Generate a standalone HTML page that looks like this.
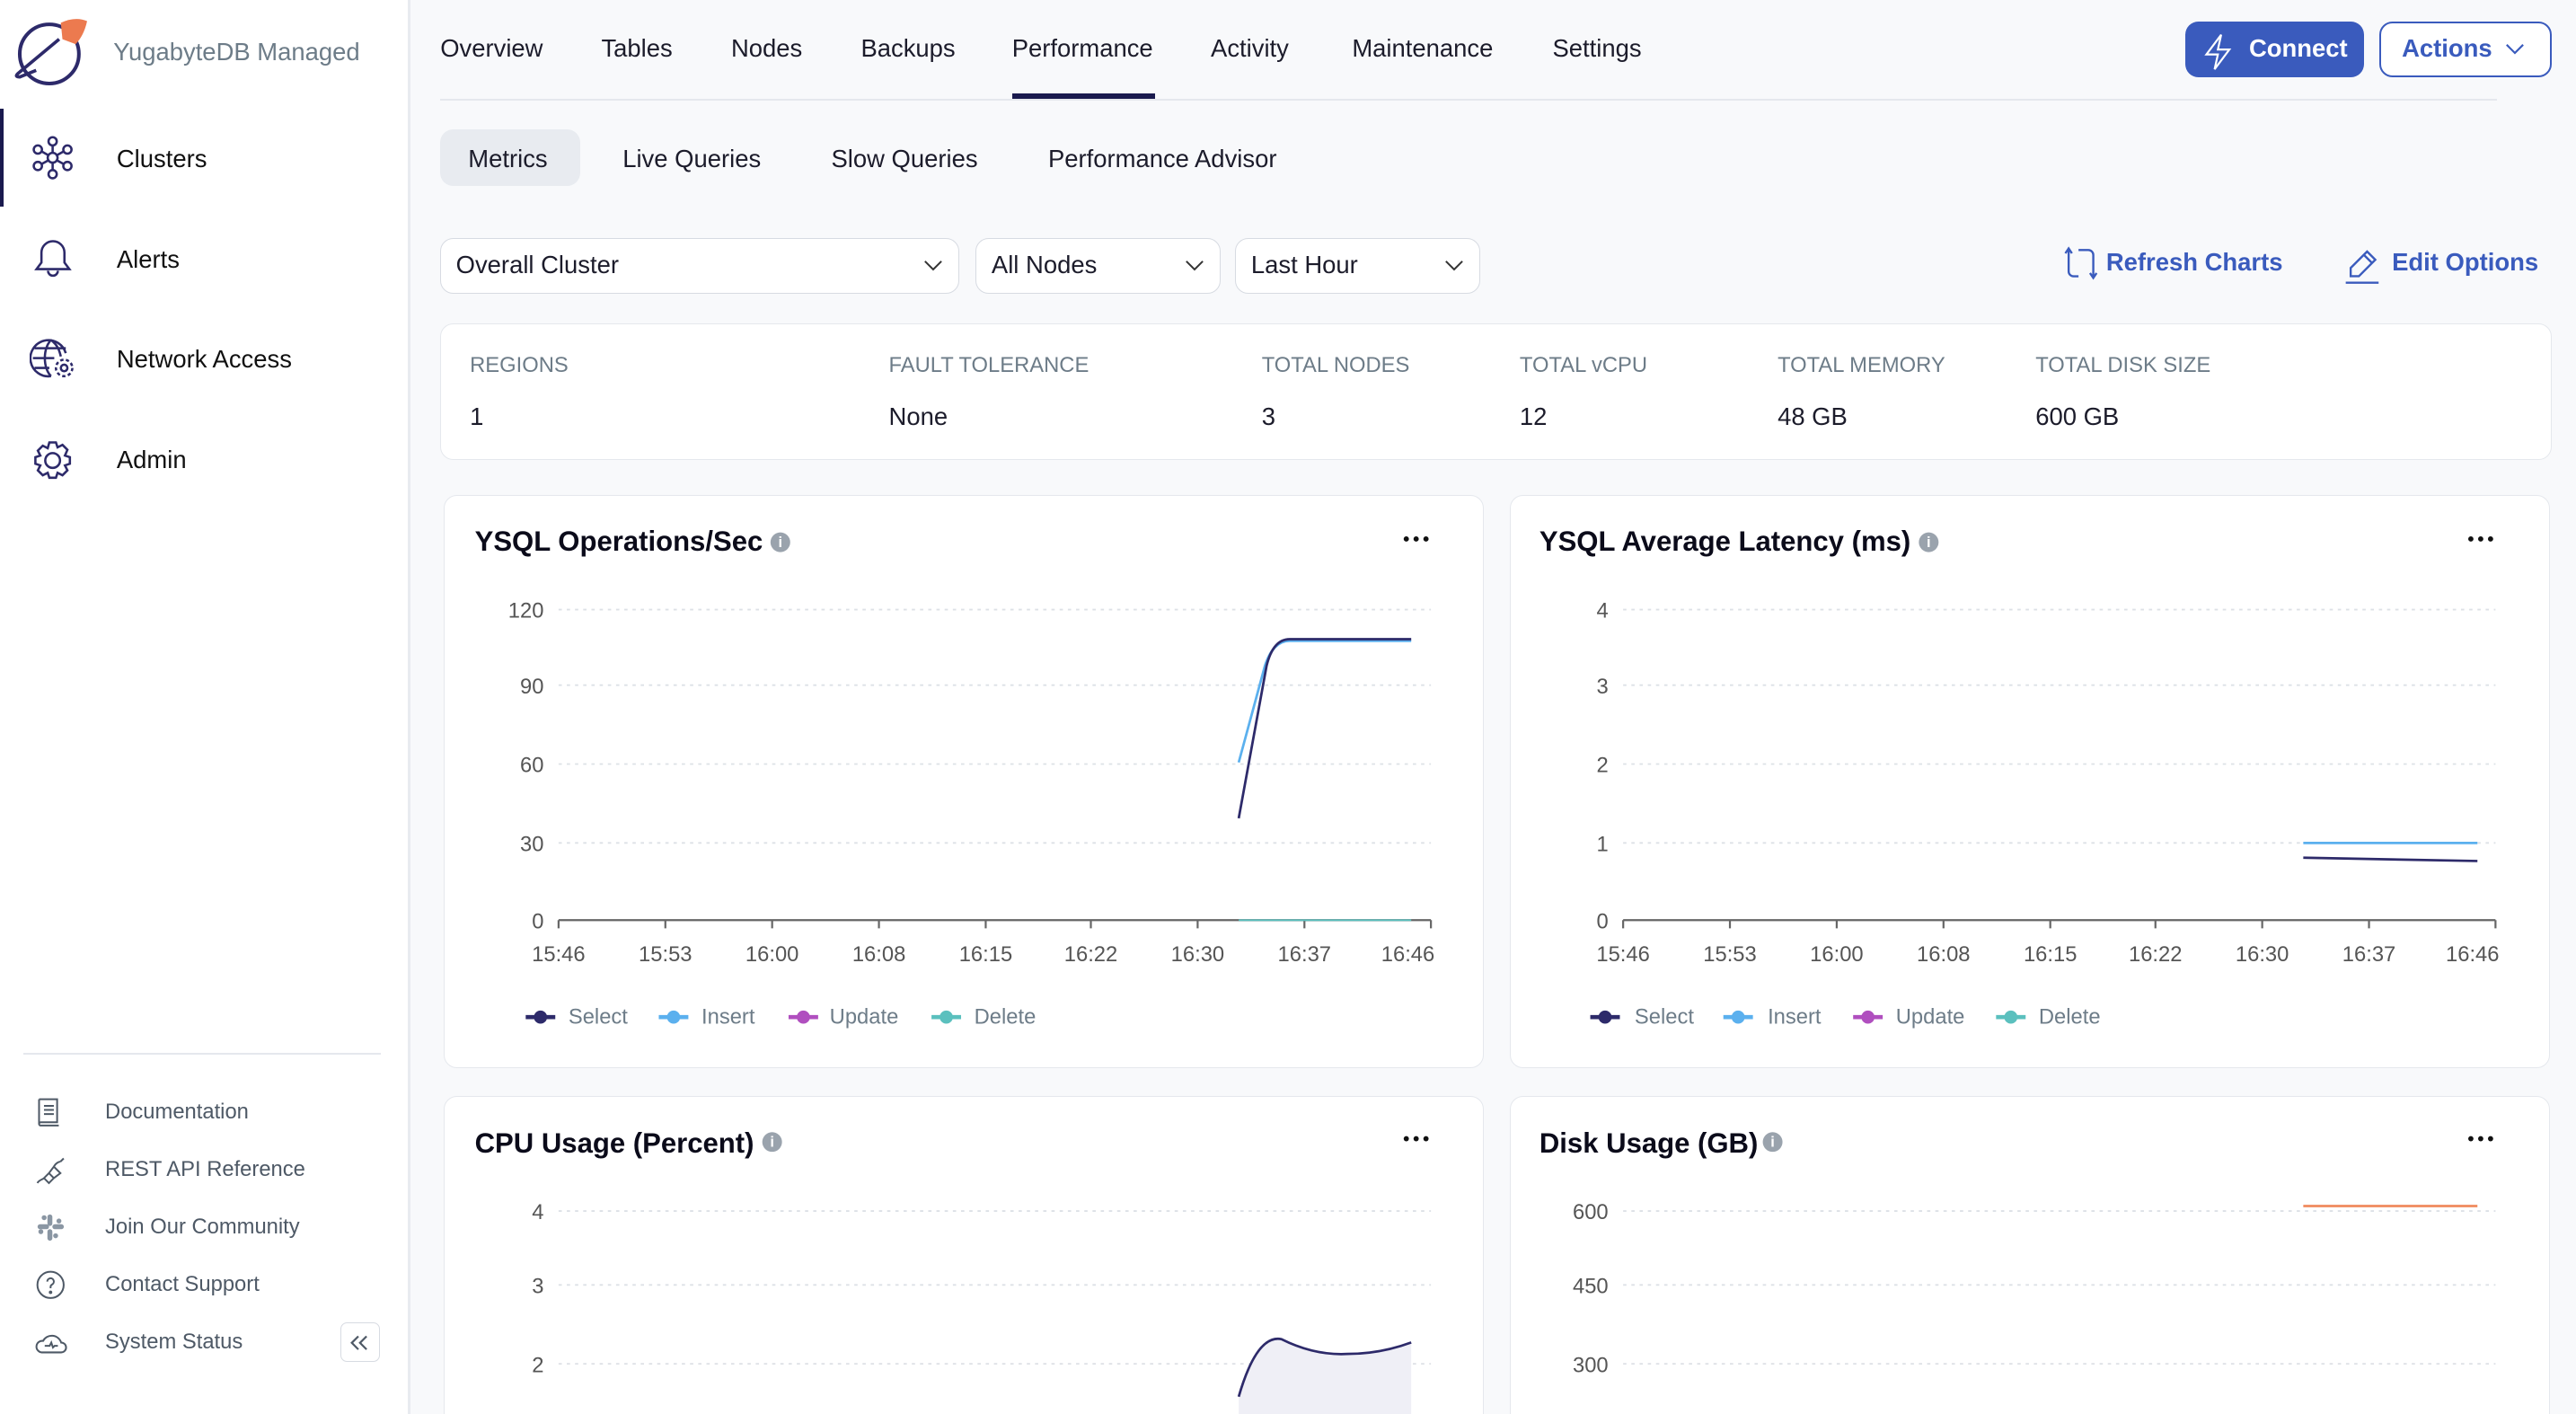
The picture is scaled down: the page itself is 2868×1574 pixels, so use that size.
<!DOCTYPE html>
<html><head><meta charset="utf-8">
<style>
html,body{margin:0;padding:0;width:2868px;height:1574px;overflow:hidden;background:#f8f9fb;}
#r{zoom:1.82908;position:relative;width:1568px;height:861px;font-family:"Liberation Sans",sans-serif;color:#1c1c2b;}
.a{position:absolute;white-space:nowrap;}
.side{position:absolute;left:0;top:0;width:248px;height:861px;background:#fff;border-right:2px solid #e8ebf0;}
.nav{font-size:15px;color:#111;}
.bl{font-size:13px;color:#4e5966;}
.tab{font-size:15px;top:21px;color:#1c1c2b;}
.sel{position:absolute;top:145px;background:#fff;border:1px solid #d7dbe2;border-radius:8px;font-size:15px;line-height:32px;padding-left:9px;box-sizing:border-box;height:34px}
.card{position:absolute;background:#fff;border:1px solid #e5e8ed;border-radius:8px;}
.lab{font-size:13px;color:#6d7c88;top:215px;}
.val{font-size:15px;top:245px;}
.ttl{font-size:17px;font-weight:bold;color:#0b0b1a;}
</style></head><body><div id="r">
<div class="side"></div>
<svg class="a" style="left:6px;top:10px" width="50" height="44" viewBox="0 0 50 44">
<circle cx="24" cy="23" r="18" fill="none" stroke="#2d2a6a" stroke-width="2.2"/>
<path d="M30 14 L6 34 Q2 37 6 37 L16 33" fill="none" stroke="#2d2a6a" stroke-width="2"/>
<path d="M31 4 Q40 0 47 3 Q45 12 40 17 L32 14 Z" fill="#ec7a4f"/>
</svg>
<div class="a" style="left:69px;top:23px;font-size:15px;color:#6d7c88">YugabyteDB Managed</div>
<div class="a" style="left:0;top:66px;width:2px;height:60px;background:#1a1a4e"></div>
<svg class="a" style="left:18px;top:82px" width="28" height="28" viewBox="0 0 28 28" fill="none" stroke="#2d2a6a" stroke-width="1.4">
<circle cx="14" cy="14" r="3"/><circle cx="14" cy="4" r="2.5"/><circle cx="14" cy="24" r="2.5"/><circle cx="5" cy="9" r="2.5"/><circle cx="23" cy="9" r="2.5"/><circle cx="5" cy="19" r="2.5"/><circle cx="23" cy="19" r="2.5"/>
<path d="M14 6.5V11M14 17v4.5M7 10l4.5 2.5M21 10l-4.5 2.5M7 18l4.5-2.5M21 18l-4.5-2.5"/></svg>
<div class="a nav" style="left:71px;top:88px">Clusters</div>
<svg class="a" style="left:20px;top:144px" width="24" height="26" viewBox="0 0 24 26" fill="none" stroke="#2d2a6a" stroke-width="1.4">
<path d="M12 3a7 7 0 0 0-7 7v6l-3 4h20l-3-4v-6a7 7 0 0 0-7-7zM9 21a3 3 0 0 0 6 0"/></svg>
<div class="a nav" style="left:71px;top:149px">Alerts</div>
<svg class="a" style="left:18px;top:204px" width="28" height="28" viewBox="0 0 28 28" fill="none" stroke="#2d2a6a" stroke-width="1.4">
<path d="M22 11A11 11 0 1 0 13 25M2 14h13M3 8h19M3 20h9M13 3c-5 5-5 17 0 22M13 3c4 3 5 6 6 10"/><circle cx="21" cy="20" r="2"/><circle cx="21" cy="20" r="5" stroke-dasharray="2 1.5"/></svg>
<div class="a nav" style="left:71px;top:210px">Network Access</div>
<svg class="a" style="left:18px;top:266px" width="28" height="28" viewBox="0 0 28 28" fill="none" stroke="#2d2a6a" stroke-width="1.4">
<circle cx="14" cy="14" r="4.5"/><path d="M12 3h4l1 3 3-1.5 3 3L21.5 11l3 1v4l-3 1 1.5 3-3 3-3-1.5-1 3h-4l-1-3-3 1.5-3-3L6.5 17l-3-1v-4l3-1L5 8l3-3 3 1.5z"/></svg>
<div class="a nav" style="left:71px;top:271px">Admin</div>
<div class="a" style="left:14px;top:641px;width:218px;height:1px;background:#e5e8ed"></div>
<svg class="a" style="left:21px;top:667px" width="20" height="20" viewBox="0 0 20 20" fill="none" stroke="#4e5966" stroke-width="1.1"><path d="M3 2h11v14H4a1 1 0 0 0 0 2h11M3 2v15M6 6h6M6 8.5h6M6 11h6"/></svg>
<div class="a bl" style="left:64px;top:669px">Documentation</div>
<svg class="a" style="left:21px;top:702px" width="20" height="20" viewBox="0 0 20 20" fill="none" stroke="#4e5966" stroke-width="1.1"><path d="M2 18c1-2 3-2 4-3M6 15l3-3 3 3-3 3zM9 12l3-4 4 4-4 3M16 5l2-2M12 8c1-2 3-3 4-3"/></svg>
<div class="a bl" style="left:64px;top:704px">REST API Reference</div>
<svg class="a" style="left:22px;top:738px" width="18" height="18" viewBox="0 0 18 18" fill="#8a96a3"><rect x="7" y="1" width="3" height="7" rx="1.5"/><rect x="7" y="10" width="3" height="7" rx="1.5"/><rect x="1" y="7" width="7" height="3" rx="1.5"/><rect x="10" y="7" width="7" height="3" rx="1.5"/><circle cx="3" cy="11.5" r="1.5"/><circle cx="14" cy="5" r="1.5"/><circle cx="12" cy="14" r="1.5"/><circle cx="5" cy="3" r="1.5"/></svg>
<div class="a bl" style="left:64px;top:739px">Join Our Community</div>
<svg class="a" style="left:21px;top:772px" width="20" height="20" viewBox="0 0 20 20" fill="none" stroke="#4e5966" stroke-width="1.1"><circle cx="10" cy="10" r="8"/><path d="M8 8a2 2 0 1 1 3 1.7c-1 .6-1 1-1 2.3"/><circle cx="10" cy="14.5" r=".5"/></svg>
<div class="a bl" style="left:64px;top:774px">Contact Support</div>
<svg class="a" style="left:20px;top:808px" width="22" height="18" viewBox="0 0 22 18" fill="none" stroke="#4e5966" stroke-width="1.1"><path d="M5 15h12a3 3 0 0 0 0-6 6 6 0 0 0-11-1 3.5 3.5 0 0 0-1 7zM7 11h3l1-2 1 3 1-1h2"/></svg>
<div class="a bl" style="left:64px;top:809px">System Status</div>
<div class="a" style="left:207px;top:805px;width:23px;height:23px;border:1px solid #d7dbe2;border-radius:4px;background:#fff"></div>
<svg class="a" style="left:212px;top:810px" width="14" height="14" viewBox="0 0 14 14" fill="none" stroke="#4e5966" stroke-width="1.2"><path d="M6 3L2 7l4 4M11 3L7 7l4 4"/></svg>
<div class="a tab" style="left:268px">Overview</div>
<div class="a tab" style="left:366px">Tables</div>
<div class="a tab" style="left:445px">Nodes</div>
<div class="a tab" style="left:524px">Backups</div>
<div class="a tab" style="left:616px">Performance</div>
<div class="a tab" style="left:737px">Activity</div>
<div class="a tab" style="left:823px">Maintenance</div>
<div class="a tab" style="left:945px">Settings</div>
<div class="a" style="left:268px;top:60px;width:1252px;height:1px;background:#e5e8ed"></div>
<div class="a" style="left:616px;top:57px;width:87px;height:3px;background:#1a1a4e"></div>
<div class="a" style="left:1330px;top:13px;width:109px;height:34px;background:#3a5bbd;border-radius:8px"></div>
<svg class="a" style="left:1340px;top:19px" width="22" height="24" viewBox="0 0 22 24" fill="none" stroke="#fff" stroke-width="1.2"><path d="M12 2L3 14h7l-2 9 9-12h-7z"/></svg>
<div class="a" style="left:1369px;top:21px;font-size:15px;font-weight:bold;color:#fff">Connect</div>
<div class="a" style="left:1448px;top:13px;width:103px;height:32px;border:1.5px solid #3a5bbd;border-radius:8px;background:#fff"></div>
<div class="a" style="left:1462px;top:21px;font-size:15px;font-weight:bold;color:#3a5bbd">Actions</div>
<svg class="a" style="left:1525px;top:26px" width="12" height="8" viewBox="0 0 12 8" fill="none" stroke="#3a5bbd" stroke-width="1.2"><path d="M1 1l5 5 5-5"/></svg>
<div class="a" style="left:268px;top:79px;width:85px;height:34px;background:#e8ebf0;border-radius:8px"></div>
<div class="a tab" style="left:285px;top:88px">Metrics</div>
<div class="a tab" style="left:379px;top:88px">Live Queries</div>
<div class="a tab" style="left:506px;top:88px">Slow Queries</div>
<div class="a tab" style="left:638px;top:88px">Performance Advisor</div>
<div class="sel" style="left:268px;width:316px">Overall Cluster</div>
<div class="sel" style="left:594px;width:149px">All Nodes</div>
<div class="sel" style="left:752px;width:149px">Last Hour</div>
<svg class="a" style="left:562px;top:158px" width="12" height="8" viewBox="0 0 12 8" fill="none" stroke="#333" stroke-width="1.1"><path d="M1 1l5 5 5-5"/></svg>
<svg class="a" style="left:721px;top:158px" width="12" height="8" viewBox="0 0 12 8" fill="none" stroke="#333" stroke-width="1.1"><path d="M1 1l5 5 5-5"/></svg>
<svg class="a" style="left:879px;top:158px" width="12" height="8" viewBox="0 0 12 8" fill="none" stroke="#333" stroke-width="1.1"><path d="M1 1l5 5 5-5"/></svg>
<svg class="a" style="left:1254px;top:148px" width="24" height="24" viewBox="0 0 24 24" fill="none" stroke="#3a5bbd" stroke-width="1.3"><path d="M3 6l2-3 2 3M5 3v14a3 3 0 0 0 3 3h3M11 4h6a3 3 0 0 1 3 3v14M18 18l2 3 2-3"/></svg>
<div class="a" style="left:1282px;top:151px;font-size:15px;font-weight:bold;color:#3a5bbd">Refresh Charts</div>
<svg class="a" style="left:1426px;top:147px" width="24" height="26" viewBox="0 0 24 26" fill="none" stroke="#3a5bbd" stroke-width="1.3"><path d="M5 21v-5L15 6l5 5-10 10zM13 8l5 5M2 25h20"/></svg>
<div class="a" style="left:1456px;top:151px;font-size:15px;font-weight:bold;color:#3a5bbd">Edit Options</div>
<div class="card" style="left:268px;top:197px;width:1284px;height:82px"></div>
<div class="a lab" style="left:286px">REGIONS</div><div class="a val" style="left:286px">1</div>
<div class="a lab" style="left:541px">FAULT TOLERANCE</div><div class="a val" style="left:541px">None</div>
<div class="a lab" style="left:768px">TOTAL NODES</div><div class="a val" style="left:768px">3</div>
<div class="a lab" style="left:925px">TOTAL vCPU</div><div class="a val" style="left:925px">12</div>
<div class="a lab" style="left:1082px">TOTAL MEMORY</div><div class="a val" style="left:1082px">48 GB</div>
<div class="a lab" style="left:1239px">TOTAL DISK SIZE</div><div class="a val" style="left:1239px">600 GB</div>
<div class="card" style="left:270px;top:301px;width:632px;height:348px"></div>
<div class="card" style="left:919px;top:301px;width:632px;height:348px"></div>
<div class="card" style="left:270px;top:667px;width:632px;height:220px"></div>
<div class="card" style="left:919px;top:667px;width:632px;height:220px"></div>
<div class="a ttl" style="left:289px;top:320px">YSQL Operations/Sec</div>
<div class="a ttl" style="left:937px;top:320px">YSQL Average Latency (ms)</div>
<div class="a ttl" style="left:289px;top:686px">CPU Usage (Percent)</div>
<div class="a ttl" style="left:937px;top:686px">Disk Usage (GB)</div>
<svg class="a" style="left:0;top:0" width="1568" height="861" font-family="Liberation Sans, sans-serif">
<g fill="#9aa3ad"><circle cx="475" cy="330" r="6"/><circle cx="1174" cy="330" r="6"/><circle cx="470" cy="695" r="6"/><circle cx="1079" cy="695" r="6"/></g>
<g fill="#fff" font-size="9" font-weight="bold" text-anchor="middle"><text x="475" y="333">i</text><text x="1174" y="333">i</text><text x="470" y="698">i</text><text x="1079" y="698">i</text></g>
<g fill="#111"><circle cx="856" cy="328" r="1.6"/><circle cx="862" cy="328" r="1.6"/><circle cx="868" cy="328" r="1.6"/>
<circle cx="1504" cy="328" r="1.6"/><circle cx="1510" cy="328" r="1.6"/><circle cx="1516" cy="328" r="1.6"/>
<circle cx="856" cy="693" r="1.6"/><circle cx="862" cy="693" r="1.6"/><circle cx="868" cy="693" r="1.6"/>
<circle cx="1504" cy="693" r="1.6"/><circle cx="1510" cy="693" r="1.6"/><circle cx="1516" cy="693" r="1.6"/></g>
<g stroke="#dde1e6" stroke-dasharray="2 3" stroke-width="1">
<path d="M340 371H871M340 417H871M340 465H871M340 513H871M988 371H1519M988 417H1519M988 465H1519M988 513H1519M340 737H871M340 782H871M340 830H871M988 737H1519M988 782H1519M988 830H1519"/></g>
<g font-size="13" fill="#555" text-anchor="end">
<text x="331" y="376">120</text><text x="331" y="422">90</text><text x="331" y="470">60</text><text x="331" y="518">30</text><text x="331" y="565">0</text>
<text x="979" y="376">4</text><text x="979" y="422">3</text><text x="979" y="470">2</text><text x="979" y="518">1</text><text x="979" y="565">0</text>
<text x="331" y="742">4</text><text x="331" y="787">3</text><text x="331" y="835">2</text>
<text x="979" y="742">600</text><text x="979" y="787">450</text><text x="979" y="835">300</text></g>
<g stroke="#666" stroke-width="1.2" fill="none">
<path d="M340 560H871M340 560v5M405 560v5M470 560v5M535 560v5M600 560v5M664 560v5M729 560v5M794 560v5M871 560v5"/>
<path d="M988 560H1519M988 560v5M1053 560v5M1118 560v5M1183 560v5M1248 560v5M1312 560v5M1377 560v5M1442 560v5M1519 560v5"/></g>
<g font-size="13" fill="#555" text-anchor="middle">
<text x="340" y="585">15:46</text><text x="405" y="585">15:53</text><text x="470" y="585">16:00</text><text x="535" y="585">16:08</text><text x="600" y="585">16:15</text><text x="664" y="585">16:22</text><text x="729" y="585">16:30</text><text x="794" y="585">16:37</text><text x="857" y="585">16:46</text>
<text x="988" y="585">15:46</text><text x="1053" y="585">15:53</text><text x="1118" y="585">16:00</text><text x="1183" y="585">16:08</text><text x="1248" y="585">16:15</text><text x="1312" y="585">16:22</text><text x="1377" y="585">16:30</text><text x="1442" y="585">16:37</text><text x="1505" y="585">16:46</text></g>
<g fill="none" stroke-width="1.5">
<path d="M754 464 L770 405 Q775 390 785 390 L859 390" stroke="#5bb0ee"/>
<path d="M754 498 L771 405 Q775 389 785 389 L859 389" stroke="#2d2a6a"/>
<path d="M1402 513 L1508 513" stroke="#5bb0ee"/>
<path d="M1402 522 L1508 524" stroke="#2d2a6a"/>
<path d="M1402 734 L1508 734" stroke="#f08a5d"/>
<path d="M754 560 L859 560" stroke="#5bc0be" stroke-width="1"/>
</g>
<path d="M754 850 Q765 812 780 815 Q800 825 820 824 Q840 824 859 817 L859 861 L754 861Z" fill="#efeff6"/>
<path d="M754 850 Q765 812 780 815 Q800 825 820 824 Q840 824 859 817" fill="none" stroke="#2d2a6a" stroke-width="1.5"/>
<g stroke-width="2.5">
<path d="M320 619h18" stroke="#2d2a6a"/><path d="M401 619h18" stroke="#5bb0ee"/><path d="M480 619h18" stroke="#b04fbf"/><path d="M567 619h18" stroke="#5bc0be"/>
<path d="M968 619h18" stroke="#2d2a6a"/><path d="M1049 619h18" stroke="#5bb0ee"/><path d="M1128 619h18" stroke="#b04fbf"/><path d="M1215 619h18" stroke="#5bc0be"/></g>
<circle cx="329" cy="619" r="4" fill="#2d2a6a"/><circle cx="410" cy="619" r="4" fill="#5bb0ee"/><circle cx="489" cy="619" r="4" fill="#b04fbf"/><circle cx="576" cy="619" r="4" fill="#5bc0be"/>
<circle cx="977" cy="619" r="4" fill="#2d2a6a"/><circle cx="1058" cy="619" r="4" fill="#5bb0ee"/><circle cx="1137" cy="619" r="4" fill="#b04fbf"/><circle cx="1224" cy="619" r="4" fill="#5bc0be"/>
<g font-size="13" fill="#6d7c88">
<text x="346" y="623">Select</text><text x="427" y="623">Insert</text><text x="505" y="623">Update</text><text x="593" y="623">Delete</text>
<text x="995" y="623">Select</text><text x="1076" y="623">Insert</text><text x="1154" y="623">Update</text><text x="1241" y="623">Delete</text></g>
</svg>
</div></body></html>
